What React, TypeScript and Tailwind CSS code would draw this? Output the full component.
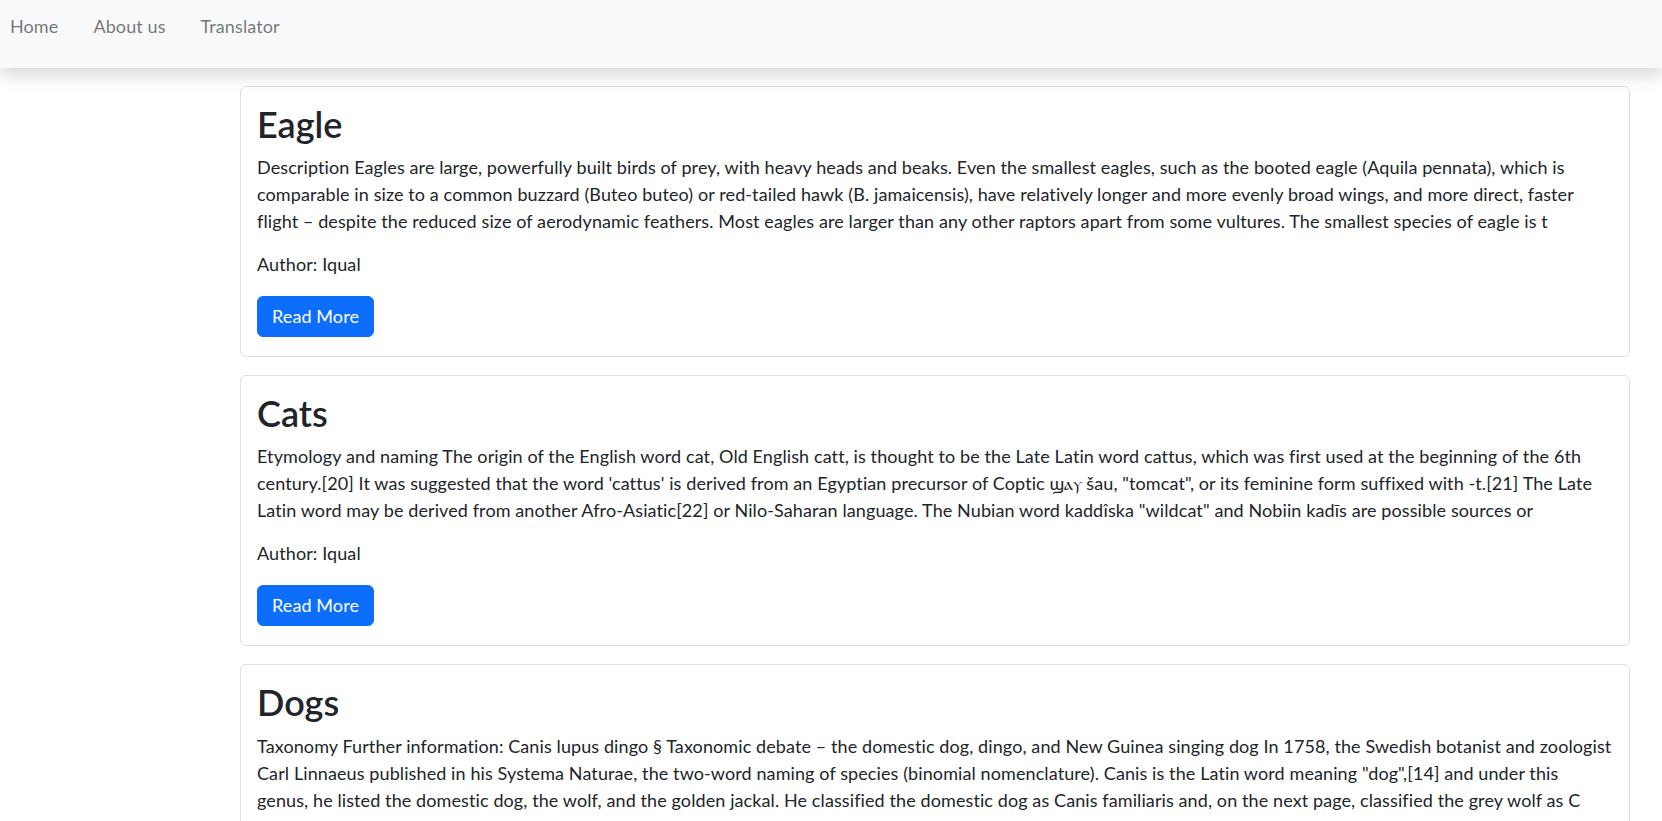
import React from "react";

const posts = [
  {
    title: "Eagle",
    lines: [
      "Description Eagles are large, powerfully built birds of prey, with heavy heads and beaks. Even the smallest eagles, such as the booted eagle (Aquila pennata), which is",
      "comparable in size to a common buzzard (Buteo buteo) or red-tailed hawk (B. jamaicensis), have relatively longer and more evenly broad wings, and more direct, faster",
      "flight – despite the reduced size of aerodynamic feathers. Most eagles are larger than any other raptors apart from some vultures. The smallest species of eagle is t",
    ],
  },
  {
    title: "Cats",
    lines: [
      "Etymology and naming The origin of the English word cat, Old English catt, is thought to be the Late Latin word cattus, which was first used at the beginning of the 6th",
      "century.[20] It was suggested that the word 'cattus' is derived from an Egyptian precursor of Coptic ϣⲁⲩ šau, \"tomcat\", or its feminine form suffixed with -t.[21] The Late",
      "Latin word may be derived from another Afro-Asiatic[22] or Nilo-Saharan language. The Nubian word kaddîska \"wildcat\" and Nobiin kadīs are possible sources or",
    ],
  },
  {
    title: "Dogs",
    lines: [
      "Taxonomy Further information: Canis lupus dingo § Taxonomic debate – the domestic dog, dingo, and New Guinea singing dog In 1758, the Swedish botanist and zoologist",
      "Carl Linnaeus published in his Systema Naturae, the two-word naming of species (binomial nomenclature). Canis is the Latin word meaning \"dog\",[14] and under this",
      "genus, he listed the domestic dog, the wolf, and the golden jackal. He classified the domestic dog as Canis familiaris and, on the next page, classified the grey wolf as C",
    ],
  },
];

export default function App() {
  return (
    <div
      className="min-h-screen bg-white text-[#212529] text-[18px] leading-[1.5] tracking-[0.1px]"
      style={{ fontFamily: "Lato, 'Noto Sans', sans-serif" }}
    >
      <nav className="relative z-10 h-[68px] bg-[#f8f9fa] shadow-[0_8px_16px_rgba(0,0,0,0.15)]">
        <ul className="flex gap-[35px] pl-[10px] pt-[13px]">
          <li className="text-black/55">Home</li>
          <li className="text-black/55">About us</li>
          <li className="text-black/55">Translator</li>
        </ul>
      </nav>
      <main className="flex flex-col gap-[18px] pl-[240px] pr-[32px] pt-[18px]">
        {posts.map((p) => (
          <div
            key={p.title}
            className="rounded-[6px] border border-[#dfdfdf] bg-white px-[16px] pt-[16px] pb-[19px]"
          >
            <h1 className="mb-[8px] text-[36px] font-semibold leading-[1.2] tracking-normal">{p.title}</h1>
            <p className="mb-[16px]">
              {p.lines.map((l, i) => (
                <span key={i} className="block whitespace-nowrap">
                  {l}
                </span>
              ))}
            </p>
            <p className="mb-[18px]">Author: Iqual</p>
            <button className="rounded-[6px] border border-[#0d6efd] bg-[#0d6efd] px-[14px] py-[6px] text-white leading-[1.5]">
              Read More
            </button>
          </div>
        ))}
      </main>
    </div>
  );
}
